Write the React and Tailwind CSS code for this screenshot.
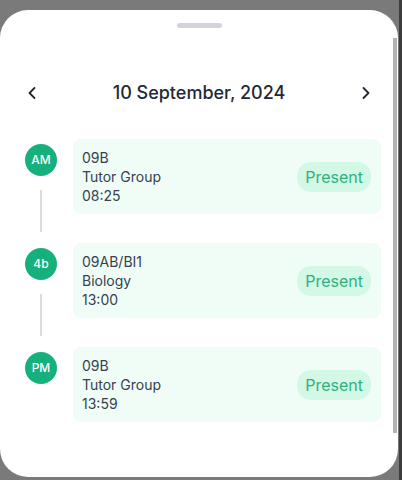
import React from 'react'

const rows = [
  { tag: 'AM', code: '09B', name: 'Tutor Group', time: '08:25' },
  { tag: '4b', code: '09AB/BI1', name: 'Biology', time: '13:00' },
  { tag: 'PM', code: '09B', name: 'Tutor Group', time: '13:59' },
]

const Chevron = ({ dir }) => (
  <svg width="20" height="20" viewBox="0 0 24 24" fill="none" stroke="#1f2937" strokeWidth="2.2" strokeLinecap="round" strokeLinejoin="round">
    {dir === 'left' ? <path d="M15 18l-6-6 6-6" /> : <path d="M9 18l6-6-6-6" />}
  </svg>
)

const App = () => {
  return (
    <div className='flex h-[480px] w-[402px] overflow-hidden bg-[#7a7a7a]' style={{ fontFamily: 'Inter, "Noto Sans", sans-serif' }}>
      <div className='relative mt-[10px] h-[467px] w-[398px] rounded-[28px] bg-white'>
        <div className='mx-auto mt-[13px] h-[5px] w-[45px] rounded-full bg-[#d1d5db]' />

        <div className='mt-[51px] flex items-center justify-between px-[22px]'>
          <Chevron dir='left' />
          <p className='text-[18px] font-medium text-[#1f2937]'>10 September, 2024</p>
          <Chevron dir='right' />
        </div>

        <div className='mt-[33px] flex flex-col gap-[29px] pl-[25px]'>
          {rows.map((r, i) => (
            <div key={i} className='flex gap-[16px]'>
              <div className='flex h-[75px] w-[32px] flex-col items-center overflow-visible'>
                <div className='mt-[5px] flex h-[32px] w-[32px] shrink-0 items-center justify-center rounded-full bg-[#16b07d] text-[12px] font-medium text-white'>
                  {r.tag}
                </div>
                {i < rows.length - 1 && <div className='mt-[14px] h-[42px] w-[2px] shrink-0 bg-[#d9dde2]' />}
              </div>
              <div className='flex h-[75px] w-[308px] items-center justify-between rounded-[8px] bg-[#effdf6] py-[9px] pl-[9px] pr-[10px]'>
                <div className='text-[14px] leading-[19px] text-[#374151]'>
                  <p>{r.code}</p>
                  <p>{r.name}</p>
                  <p>{r.time}</p>
                </div>
                <span className='flex h-[30px] items-center rounded-[14px] bg-[#d3f8e6] px-[8px] text-[16px] text-[#2fb07f]'>
                  Present
                </span>
              </div>
            </div>
          ))}
        </div>

        <div className='absolute right-[1px] top-[28px] h-[395px] w-[4px] bg-[#b3b3b3]' />
      </div>
      <div className='ml-auto h-full w-[3px] bg-[#3c3c3c]' />
    </div>
  )
}

export default App
